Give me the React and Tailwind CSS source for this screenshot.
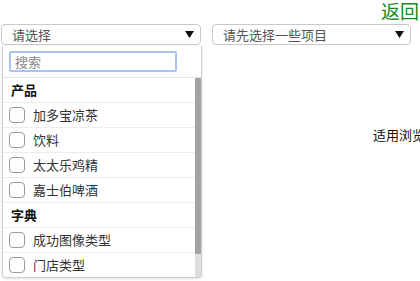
const groups = [
  { title: '产品', items: ['加多宝凉茶', '饮料', '太太乐鸡精', '嘉士伯啤酒'] },
  { title: '字典', items: ['成功图像类型', '门店类型'] },
];

function Caret() {
  return (
    <svg width="9" height="7" viewBox="0 0 9 7" className="shrink-0">
      <path d="M0 0h9L4.5 7z" fill="#111" />
    </svg>
  );
}

function SelectBox({ text, className }) {
  return (
    <div
      className={`h-[21px] flex items-center justify-between pl-[10px] pr-[6px] border border-[#c8c8c8] rounded-[4px] bg-white ${className}`}
    >
      <span className="text-[13px] leading-none text-[#555]">{text}</span>
      <Caret />
    </div>
  );
}

export default function App() {
  return (
    <div
      className="relative w-[420px] h-[281px] overflow-hidden bg-white"
      style={{ fontFamily: '"Noto Sans CJK SC", "Noto Sans", sans-serif' }}
    >
      <div className="h-[24px] pl-[381px] whitespace-nowrap text-[19px] leading-[22px] text-[#1a8a1a]">返回</div>

      <div className="flex pl-[1px]">
        <SelectBox text="请选择" className="w-[200px]" />
        <SelectBox text="请先选择一些项目" className="w-[199px] ml-[11px]" />
      </div>

      <div className="pt-[81px] pl-[373px] whitespace-nowrap text-[13px] leading-[18px] text-[#111]">适用浏览器：IE8、360、FireFox、Chrome、Safari、Opera</div>

      <div className="absolute left-[2px] top-[46px] w-[200px] h-[232px] flex flex-col bg-white border border-[#d0d0d0] border-t-0 rounded-b-[4px] shadow-[0_1px_3px_rgba(0,0,0,0.12)]">
        <div className="h-[32px] shrink-0 border-b border-[#e6e6e6] pl-[6px] pt-[5px]">
          <div className="w-[168px] h-[21px] border-2 border-[#a9c1f3] rounded-[2px] flex items-center pl-[4px]">
            <span className="text-[13px] leading-none text-[#888]">搜索</span>
          </div>
        </div>
        <div className="flex flex-1 min-h-0">
          <div className="flex-1 overflow-hidden">
            {groups.map((g) => (
              <div key={g.title}>
                <div className="h-[25px] flex items-center pl-[8px] border-b border-[#ececec] text-[13px] font-bold text-[#111]">
                  {g.title}
                </div>
                {g.items.map((item) => (
                  <div key={item} className="h-[25px] flex items-center gap-[8px] pl-[6px] border-b border-[#ececec]">
                    <span className="w-[16px] h-[16px] rounded-[4px] border border-[#9a9a9a] bg-white shrink-0" />
                    <span className="text-[13px] text-[#333]">{item}</span>
                  </div>
                ))}
              </div>
            ))}
          </div>
          <div className="w-[6px] shrink-0 flex flex-col">
            <div className="h-[176px] bg-[#a3a3a3]" />
            <div className="flex-1 bg-[#dedede]" />
          </div>
        </div>
      </div>
    </div>
  );
}
